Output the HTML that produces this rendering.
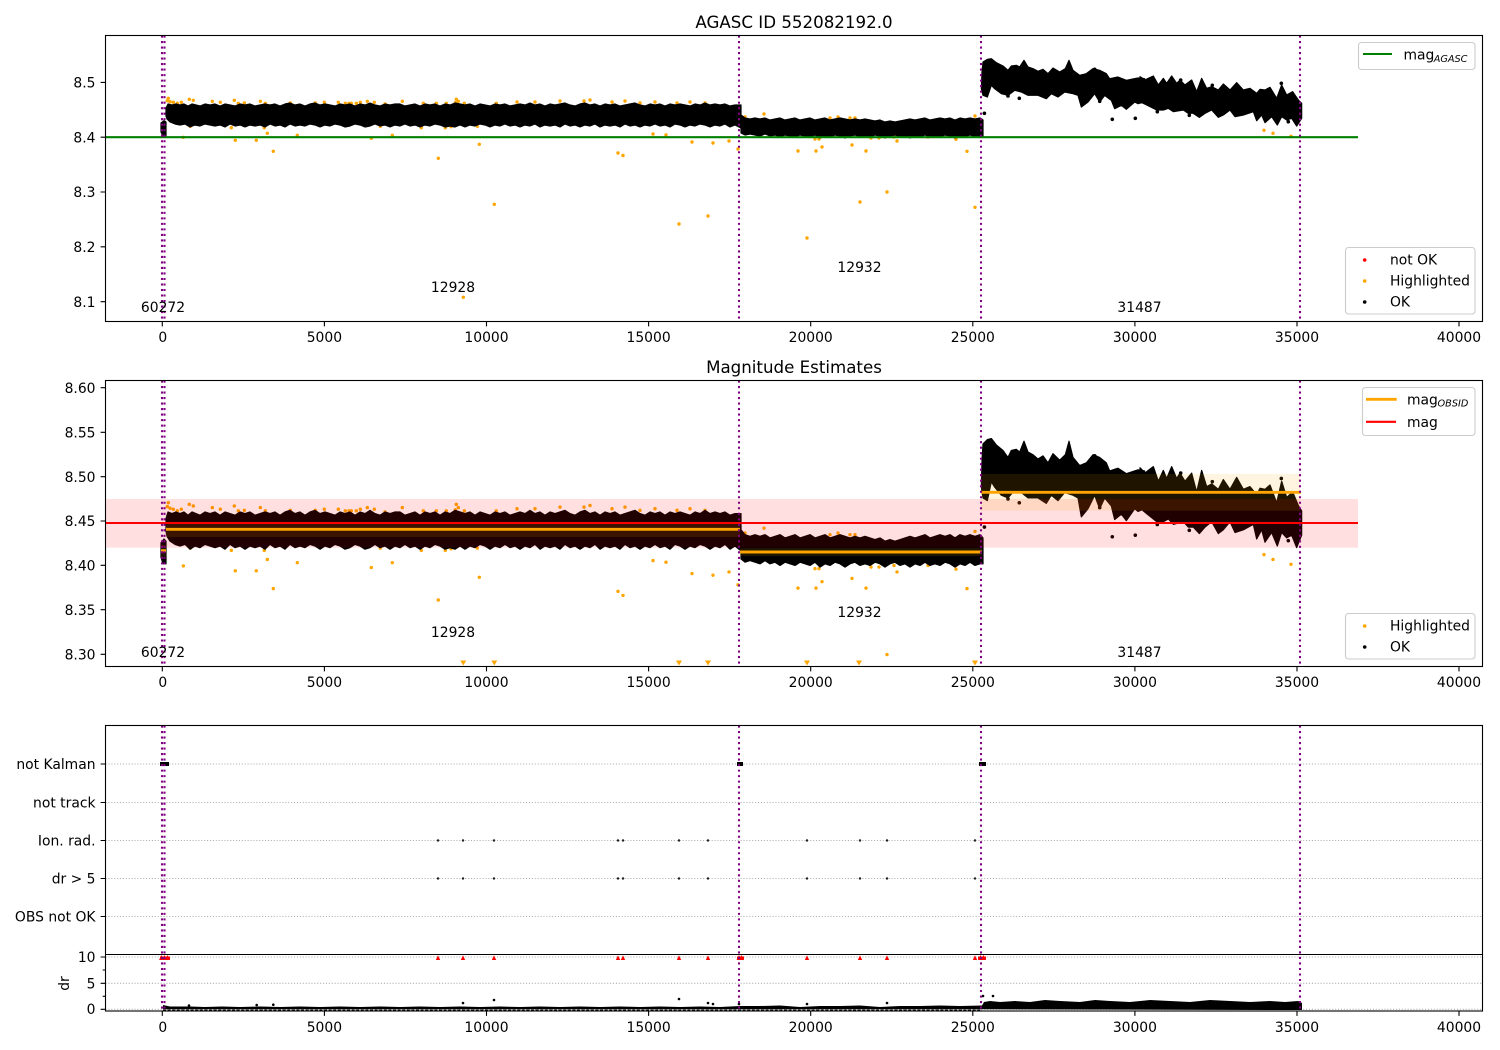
<!DOCTYPE html>
<html><head><meta charset="utf-8"><title>AGASC ID 552082192.0</title>
<style>
html,body{margin:0;padding:0;background:#fff;width:1500px;height:1050px;overflow:hidden}
svg{display:block}
text{font-family:"DejaVu Sans",sans-serif;font-size:13.89px;fill:#000}
.m{text-anchor:middle}.r{text-anchor:end}
.t{font-size:16.67px;text-anchor:middle}
.a{fill:#1a1a1a}
.s{font-size:9.72px;font-style:italic}
.fr{fill:none;stroke:#000;stroke-width:1.1}
.tk{stroke:#000;stroke-width:1.1;fill:none}
.pu{stroke:#800080;stroke-width:2.08;stroke-dasharray:2.08 3.43;fill:none}
.gr{stroke:#b0b0b0;stroke-width:1.1;stroke-dasharray:1.1 1.8;fill:none}
.lg{fill:#fff;fill-opacity:.8;stroke:#ccc;stroke-width:1.1}
.bk{fill:#000;stroke:#000;stroke-width:1.2;stroke-linejoin:round;vector-effect:non-scaling-stroke}
.dot{fill:none;stroke-linecap:round;vector-effect:non-scaling-stroke}
</style></head><body>
<svg width="1500" height="1050" viewBox="0 0 1500 1050" xmlns="http://www.w3.org/2000/svg">
<defs>
<clipPath id="c1"><rect x="105.5" y="35.5" width="1377" height="286"/></clipPath>
<clipPath id="c2"><rect x="105.5" y="380.5" width="1377" height="286"/></clipPath>
<clipPath id="c3"><rect x="105.5" y="954" width="1377" height="57"/></clipPath>
<path id="or" class="dot" stroke="#ffa500" stroke-width="3.4" d="M183.3 137.3h.01M235.3 140.3h.01M256.3 140.3h.01M267.3 133.3h.01M273.3 151.3h.01M297.3 135.3h.01M371.3 138.3h.01M392.3 135.3h.01M438.3 158.3h.01M479.3 144.3h.01M494.3 204.3h.01M463.3 297.3h.01M190.3 126.3h.01M231.3 127.7h.01M264.3 127.7h.01M380.3 126.3h.01M421.3 127.7h.01M445.3 127.7h.01M477.3 126.3h.01M451 126.7h.01M168.3 98.3h.01M167.3 100.7h.01M170 101.7h.01M173.3 102.3h.01M177.3 103.3h.01M181.3 102.3h.01M189.3 99.3h.01M193.3 100.3h.01M212.3 101.3h.01M220.3 102.3h.01M234.3 100.3h.01M238.3 103.3h.01M244.3 103h.01M260.3 101.3h.01M265.3 103.3h.01M290.3 103h.01M315.3 103h.01M324.3 102.3h.01M338.3 102.3h.01M345.3 103.3h.01M349 103.3h.01M351.3 103.3h.01M356.3 103.3h.01M360.3 102.3h.01M367.3 101.3h.01M374.3 102.3h.01M385 104h.01M402.3 101.3h.01M423.3 103.3h.01M436.3 103.3h.01M446.3 103.3h.01M455.3 102.7h.01M456.3 99.3h.01M458.3 101.3h.01M464.3 103.3h.01M496.3 103.3h.01M517 102h.01M535 102h.01M560 101h.01M584 101h.01M590 100h.01M612 102h.01M625 101h.01M640 103h.01M655 102h.01M677 103h.01M690 102h.01M705 103h.01M618 153h.01M623 155.5h.01M653 134h.01M666 135h.01M692 142h.01M713 143h.01M729 141h.01M738 149h.01M679 224h.01M708 216h.01M745 117h.01M764 114h.01M805 121h.01M830 118h.01M838 117h.01M850 118h.01M855 118h.01M798 151h.01M807 238h.01M816 151h.01M822 147h.01M819 139h.01M815 139h.01M852 145h.01M860 202h.01M866 151h.01M871 138h.01M879 138h.01M887 192h.01M894 137h.01M897 141h.01M928 137h.01M956 139.3h.01M967 151.3h.01M975 207.3h.01M975 116h.01M1264 130.3h.01M1273 133.3h.01M1291 136.3h.01"/>
<g id="bl">
<path class="bk" d="M161 123 164 120.7 166 122 166 136 163 136 161 132Z"/>
<path class="bk" d="M166 108 168 104 172 105 176 104 180 105 184 104 188 106 192 104 196 105 200 106 205 104 210 105 215 104 220 106 225 104 230 105 235 106 240 104 245 105 250 104 255 106 260 105 265 104 270 105 275 104 280 106 285 104 290 103 295 105 300 104 305 106 310 104 315 103 320 105 325 104 330 105 335 106 340 104 345 105 350 104 355 106 360 104 365 105 370 103 375 105 380 106 385 104 390 105 395 104 400 104 405 106 410 105 415 104 420 106 425 104 430 105 435 104 440 106 445 104 450 105 455 103 460 104 465 105 470 104 475 106 480 104 485 105 490 106 495 104 500 105 505 104 510 106 515 105 520 104 525 105 530 103 535 105 540 104 545 106 550 104 555 105 560 104 565 103 570 105 575 106 580 104 585 103 590 105 595 104 600 106 605 104 610 105 615 104 620 106 625 105 630 104 635 103 640 105 645 106 650 104 655 105 660 104 665 106 670 104 675 105 680 104 685 105 690 106 695 104 700 105 705 103 710 105 715 104 720 105 725 104 730 106 735 105 741 105 741 128 735 125 730 127 725 124 720 126 715 125 710 127 705 125 700 124 695 126 690 125 685 127 680 125 675 124 670 127 665 125 660 126 655 124 650 126 645 125 640 127 635 125 630 126 625 124 620 127 615 125 610 126 605 125 600 127 595 124 590 126 585 125 580 127 575 125 570 126 565 124 560 127 555 125 550 126 545 125 540 127 535 124 530 126 525 125 520 127 515 125 510 126 505 124 500 126 495 125 490 127 485 125 480 124 475 126 470 125 465 127 460 125 455 127 450 126 445 127 440 125 435 124 430 126 425 125 420 127 415 125 410 126 405 124 400 126 395 125 390 127 385 125 380 126 375 124 370 126 365 127 360 125 355 124 350 126 345 127 340 125 335 124 330 126 325 125 320 127 315 125 310 124 305 126 300 125 295 126 290 124 285 127 280 125 275 126 270 124 265 127 260 125 255 126 250 125 245 127 240 125 235 126 230 124 225 127 220 125 215 126 210 125 205 124 200 126 195 125 190 127 185 124 180 125 175 124 170 122 167 119 166 116Z"/>
<path class="bk" d="M741 115 745 118 750 119 755 118 760 119 765 118 770 120 775 119 780 118 785 120 790 119 795 118 800 120 805 119 810 118 815 120 820 119 825 118 830 120 835 119 840 118 845 119 850 120 855 119 860 120 865 119 870 120 875 121 880 120 885 122 890 121 895 122 900 121 905 120 910 119 915 120 920 119 925 118 930 120 935 119 940 118 945 119 950 118 955 120 960 118 965 119 970 118 975 119 980 118 983 120 983 136 980 136 975 137 970 135 965 137 960 136 955 138 950 136 945 135 940 137 935 136 930 137 925 135 920 137 915 136 910 138 905 136 900 137 895 135 890 136 885 138 880 136 875 135 870 137 865 136 860 137 855 135 850 136 845 138 840 136 835 135 830 137 825 136 820 138 815 135 810 137 805 136 800 135 795 137 790 136 785 135 780 137 775 135 770 136 765 134 760 136 755 135 750 134 745 135 741 133Z"/>
<path class="bk" transform="translate(978 52) scale(.33333)" d="M10 110 12 60 15 30 28 22 40 20 55 32 75 42 90 55 100 42 115 40 125 45 138 25 150 45 165 50 180 58 195 52 210 65 225 48 245 60 262 50 273 25 285 55 305 70 325 65 345 50 365 55 385 65 395 80 420 75 445 85 480 78 500 80 500 150 480 155 470 150 445 172 430 160 410 170 400 145 380 130 365 150 350 125 330 150 310 165 300 130 285 125 260 120 240 135 220 125 205 140 180 130 150 130 130 120 110 115 90 130 70 125 50 110 40 100 28 135 15 130Z"/>
<path class="bk" transform="translate(1140 60) scale(.33333)" d="M0 50 15 60 25 55 40 48 55 75 70 55 80 70 95 48 110 70 120 60 135 75 155 60 170 95 185 55 200 85 215 80 235 90 250 72 270 90 290 68 310 90 330 85 350 100 360 88 375 90 390 82 410 115 425 75 440 105 458 95 475 120 485 130 485 175 470 198 455 175 440 180 425 170 412 195 395 170 375 188 365 165 350 182 340 155 310 165 285 170 270 150 250 165 235 172 215 150 195 160 178 172 160 160 145 160 130 150 100 155 85 145 70 150 50 150 20 135 0 125Z"/>
<path class="dot" stroke="#000" stroke-width="3.6" d="M984.4 113.3h.01M1019.3 98.3h.01M1008 96h.01M1094.7 69.3h.01M1099.7 101.3h.01M1112.3 119.3h.01M1135.3 118.3h.01M1157.3 111.7h.01M1189.3 115.3h.01M1180.7 80h.01M1212.3 85.3h.01M1281.3 83.3h.01M1288.3 121.7h.01"/>
</g>
</defs>
<rect width="1500" height="1050" fill="#fff"/>

<!-- AX 1 -->
<g clip-path="url(#c1)">
<use href="#or"/>
<use href="#bl"/>
<path d="M105.5 137.2H1358" stroke="#008000" stroke-width="2.08"/>
<path class="pu" d="M162 35.5V321.5M164.5 35.5V321.5M739 35.5V321.5M981 35.5V321.5M1300 35.5V321.5"/>
</g>
<rect class="fr" x="105.5" y="35.5" width="1377" height="286"/>
<path class="tk" d="M100.6 82.4H105.5M100.6 137.2H105.5M100.6 192H105.5M100.6 246.8H105.5M100.6 301.7H105.5M162.3 321.5v4.9M324.4 321.5v4.9M486.5 321.5v4.9M648.6 321.5v4.9M810.7 321.5v4.9M972.8 321.5v4.9M1134.9 321.5v4.9M1297 321.5v4.9M1459 321.5v4.9"/>
<text class="t" x="794" y="28">AGASC ID 552082192.0</text>
<g class="r"><text x="95.5" y="87.5">8.5</text><text x="95.5" y="142.5">8.4</text><text x="95.5" y="197">8.3</text><text x="95.5" y="252">8.2</text><text x="95.5" y="307">8.1</text></g>
<g class="m"><text x="162.8" y="342">0</text><text x="324.4" y="342">5000</text><text x="486.5" y="342">10000</text><text x="648.6" y="342">15000</text><text x="810.7" y="342">20000</text><text x="972.8" y="342">25000</text><text x="1134.9" y="342">30000</text><text x="1297" y="342">35000</text><text x="1459" y="342">40000</text></g>
<g class="m a"><text x="163" y="312">60272</text><text x="453" y="292">12928</text><text x="859.5" y="272">12932</text><text x="1139.5" y="312">31487</text></g>
<rect class="lg" x="1358.5" y="42.5" width="116.5" height="27" rx="3"/>
<path d="M1363 54H1392" stroke="#008000" stroke-width="2.08"/>
<text x="1403.5" y="59.5">mag</text><text class="s" x="1433.7" y="62">AGASC</text>
<rect class="lg" x="1345.5" y="247.5" width="129.5" height="66.5" rx="3"/>
<circle cx="1364.7" cy="260" r="1.8" fill="#f00"/><circle cx="1364.7" cy="281" r="1.8" fill="#ffa500"/><circle cx="1364.7" cy="302" r="1.8" fill="#000"/>
<text x="1390" y="264.5">not OK</text><text x="1390" y="285.5">Highlighted</text><text x="1390" y="306.5">OK</text>

<!-- AX 2 -->
<g clip-path="url(#c2)">
<use href="#or" transform="translate(0 343.5) scale(1 1.62)"/>
<use href="#bl" transform="translate(0 343.5) scale(1 1.62)"/>
<g fill="#ffa500"><path d="M460.3 660.5h6l-3 5zM491.3 660.5h6l-3 5zM676 660.5h6l-3 5zM705 660.5h6l-3 5zM804 660.5h6l-3 5zM856 660.5h6l-3 5zM972 660.5h6l-3 5z"/></g>
<rect x="105.5" y="499" width="1252.5" height="48.7" fill="#f00" fill-opacity=".125"/>
<g fill="#ffa500" fill-opacity=".12"><rect x="161" y="545" width="5" height="12"/><rect x="166" y="524" width="574" height="13"/><rect x="740" y="548" width="242" height="8"/><rect x="981" y="474" width="319" height="36.7"/></g>
<path d="M161 550.7H166M166 529.3H740M740 552H982M981 492.3H1301" stroke="#ffa500" stroke-width="2.9" fill="none"/>
<path d="M105.5 523H1358" stroke="#f00" stroke-width="2.08"/>
<path class="pu" d="M162 380.5V666.5M164.5 380.5V666.5M739 380.5V666.5M981 380.5V666.5M1300 380.5V666.5"/>
</g>
<rect class="fr" x="105.5" y="380.5" width="1377" height="286"/>
<path class="tk" d="M100.6 387.7H105.5M100.6 432.3H105.5M100.6 476.7H105.5M100.6 521H105.5M100.6 565.3H105.5M100.6 609.7H105.5M100.6 654.3H105.5M162.3 666.5v4.9M324.4 666.5v4.9M486.5 666.5v4.9M648.6 666.5v4.9M810.7 666.5v4.9M972.8 666.5v4.9M1134.9 666.5v4.9M1297 666.5v4.9M1459 666.5v4.9"/>
<text class="t" x="794" y="373">Magnitude Estimates</text>
<g class="r"><text x="95.5" y="393">8.60</text><text x="95.5" y="437.5">8.55</text><text x="95.5" y="482">8.50</text><text x="95.5" y="526">8.45</text><text x="95.5" y="570.5">8.40</text><text x="95.5" y="615">8.35</text><text x="95.5" y="659.5">8.30</text></g>
<g class="m"><text x="162.8" y="687">0</text><text x="324.4" y="687">5000</text><text x="486.5" y="687">10000</text><text x="648.6" y="687">15000</text><text x="810.7" y="687">20000</text><text x="972.8" y="687">25000</text><text x="1134.9" y="687">30000</text><text x="1297" y="687">35000</text><text x="1459" y="687">40000</text></g>
<g class="m a"><text x="163" y="657">60272</text><text x="453" y="637">12928</text><text x="859.5" y="617">12932</text><text x="1139.5" y="657">31487</text></g>
<rect class="lg" x="1362.5" y="387.5" width="112.5" height="48" rx="3"/>
<path d="M1366 399.3H1396.7" stroke="#ffa500" stroke-width="2.9"/><path d="M1366 421.8H1396" stroke="#f00" stroke-width="2.08"/>
<text x="1407" y="404.5">mag</text><text class="s" x="1437.5" y="406.7">OBSID</text><text x="1407" y="427">mag</text>
<rect class="lg" x="1345.5" y="613.5" width="129.5" height="45.5" rx="3"/>
<circle cx="1364.7" cy="626" r="1.8" fill="#ffa500"/><circle cx="1364.7" cy="647" r="1.8" fill="#000"/>
<text x="1390" y="630.5">Highlighted</text><text x="1390" y="651.5">OK</text>

<!-- AX 3 -->
<path class="gr" d="M105.5 764H1482.5M105.5 802.5H1482.5M105.5 840.5H1482.5M105.5 878.5H1482.5M105.5 916.5H1482.5M105.5 957H1482.5M105.5 983.3H1482.5M105.5 1009.3H1482.5"/>
<path fill="#000" d="M160 762h9v4h-9zM737 762h6v4h-6zM979 762h7v4h-7z"/>
<path fill="none" stroke="#222" stroke-width="2.4" stroke-linecap="round" d="M438 840.5h.01M463 840.5h.01M494 840.5h.01M618 840.5h.01M623 840.5h.01M679 840.5h.01M708 840.5h.01M807 840.5h.01M860 840.5h.01M887 840.5h.01M975 840.5h.01M438 878.5h.01M463 878.5h.01M494 878.5h.01M618 878.5h.01M623 878.5h.01M679 878.5h.01M708 878.5h.01M807 878.5h.01M860 878.5h.01M887 878.5h.01M975 878.5h.01"/>
<g clip-path="url(#c3)">
<path fill="#000" d="M163 1005 170 1006.5 190 1006.5 205 1007 222 1006.5 240 1007 260 1006.5 280 1007 300 1006.5 320 1007 340 1006.5 360 1007 380 1006.5 400 1007 420 1006.5 440 1007 460 1006.5 480 1007 500 1006.5 520 1007 540 1006.5 560 1007 580 1006.5 600 1007 620 1006.5 640 1007 660 1006.5 680 1007 700 1006.5 720 1007 740 1006 760 1006 780 1005.5 800 1007 820 1006 840 1006 860 1005.5 880 1007 900 1006 920 1006 940 1005.5 960 1006 982 1005.5 984 1002 990 1001 1000 1002 1015 1001 1030 1002 1045 1000 1060 1001 1080 1002 1095 1000 1110 1001 1130 1002 1150 1000 1170 1001 1190 1002 1210 1000 1230 1001 1250 1002 1270 1001 1285 1002 1298 1001 1302 1003 1302 1010 1280 1010 982 1009.3 740 1009.3 163 1009.3Z"/>
<path d="M163 1010.2H982" stroke="#000" stroke-width="1.2" stroke-dasharray="3 1.6" fill="none"/>
<path class="dot" stroke="#000" stroke-width="2.6" d="M189 1005.5h.01M256.7 1005h.01M273.3 1004.7h.01M463 1003h.01M494 1000h.01M679 999h.01M708 1003h.01M713 1004h.01M739 1004h.01M807 1004h.01M887 1003h.01M983 996h.01M993 996h.01"/>
<rect x="160" y="956.5" width="10" height="3" fill="#f00"/><rect x="737" y="956.5" width="7" height="3" fill="#f00"/><rect x="978" y="956.5" width="8" height="3" fill="#f00"/>
<path fill="#f00" d="M159 960l2.5-5 2.5 5zM162 960l2.5-5 2.5 5zM165 960l2.5-5 2.5 5zM435.8 960l2.2-4.6 2.2 4.6zM460.8 960l2.2-4.6 2.2 4.6zM491.8 960l2.2-4.6 2.2 4.6zM615.8 960l2.2-4.6 2.2 4.6zM620.8 960l2.2-4.6 2.2 4.6zM676.8 960l2.2-4.6 2.2 4.6zM705.8 960l2.2-4.6 2.2 4.6zM736.5 960l2.5-5 2.5 5zM739 960l2.5-5 2.5 5zM804.8 960l2.2-4.6 2.2 4.6zM857.8 960l2.2-4.6 2.2 4.6zM884.8 960l2.2-4.6 2.2 4.6zM972.8 960l2.2-4.6 2.2 4.6zM978 960l2.5-5 2.5 5zM981 960l2.5-5 2.5 5z"/>
</g>
<path class="pu" d="M162 725.5V1011M164.5 725.5V1011M739 725.5V1011M981 725.5V1011M1300 725.5V1011"/>
<rect class="fr" x="105.5" y="725.5" width="1377" height="285.5"/>
<path d="M105.5 954.5H1482.5" stroke="#000" stroke-width="1.1"/>
<path class="tk" d="M100.6 764H105.5M100.6 802.5H105.5M100.6 840.5H105.5M100.6 878.5H105.5M100.6 916.5H105.5M100.6 957H105.5M100.6 983.3H105.5M100.6 1009.3H105.5M102.7 970H105.5M102.7 996.3H105.5M162.3 1011v4.9M324.4 1011v4.9M486.5 1011v4.9M648.6 1011v4.9M810.7 1011v4.9M972.8 1011v4.9M1134.9 1011v4.9M1297 1011v4.9M1459 1011v4.9"/>
<g class="r"><text x="95.5" y="769">not Kalman</text><text x="95.5" y="807.5">not track</text><text x="95.5" y="845.5">Ion. rad.</text><text x="95.5" y="883.5">dr &gt; 5</text><text x="95.5" y="921.5">OBS not OK</text><text x="95.5" y="962">10</text><text x="95.5" y="988.5">5</text><text x="95.5" y="1014">0</text></g>
<text class="m" transform="translate(69 983.5) rotate(-90)">dr</text>
<g class="m"><text x="162.8" y="1032">0</text><text x="324.4" y="1032">5000</text><text x="486.5" y="1032">10000</text><text x="648.6" y="1032">15000</text><text x="810.7" y="1032">20000</text><text x="972.8" y="1032">25000</text><text x="1134.9" y="1032">30000</text><text x="1297" y="1032">35000</text><text x="1459" y="1032">40000</text></g>
</svg>
</body></html>
